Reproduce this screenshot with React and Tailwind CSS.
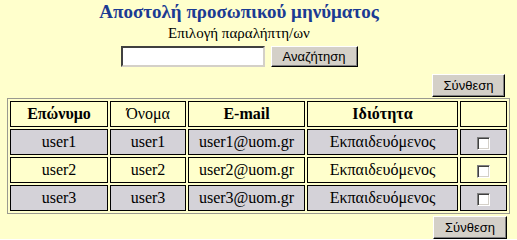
import React from "react";

const users = [
  { last: "user1", first: "user1", mail: "user1@uom.gr", role: "Εκπαιδευόμενος" },
  { last: "user2", first: "user2", mail: "user2@uom.gr", role: "Εκπαιδευόμενος" },
  { last: "user3", first: "user3", mail: "user3@uom.gr", role: "Εκπαιδευόμενος" },
];

// classic windows 3d button
const WinButton = ({ children, className = "" }) => (
  <button
    type="button"
    className={
      "border border-t-white border-l-white border-r-black border-b-black bg-[#d4d0c8] px-2 [font-family:'Liberation_Sans',Arial,sans-serif] text-[13px] leading-none text-black shadow-[inset_-1px_-1px_#808080] " +
      className
    }
  >
    {children}
  </button>
);

const Checkbox = () => (
  <span className="inline-block h-[13px] w-[13px] border border-t-[#808080] border-l-[#808080] border-r-white border-b-white bg-white align-middle shadow-[inset_1px_1px_#404040,inset_-1px_-1px_#d4d0c8]" />
);

const cell = "border border-black text-center";

export default function App() {
  return (
    <div className="min-h-[239px] w-[517px] bg-[#ffffcc] [font-family:'Liberation_Serif','Times_New_Roman',serif] text-black">
      <div className="w-[478px]">
        <h1 className="pt-[1px] text-center text-[19px] font-bold leading-[22px] text-[#1b3b93]">
          Αποστολή προσωπικού μηνύματος
        </h1>
        <p className="text-center text-[15px] leading-[20px]">Επιλογή παραλήπτη/ων</p>
        <div className="mt-[3px] flex items-center justify-center gap-[6px]">
          <input
            type="text"
            className="h-[21px] w-[144px] border-2 border-t-[#404040] border-l-[#404040] border-r-[#d4d0c8] border-b-[#d4d0c8] bg-white outline-none"
          />
          <WinButton className="h-[21px] w-[87px]">Αναζήτηση</WinButton>
        </div>
      </div>
      <div className="mt-[7px] flex justify-end pr-[12px]">
        <WinButton className="h-[23px] w-[73px]">Σύνθεση</WinButton>
      </div>
      <table className="ml-[7px] mt-[1px] w-[503px] table-fixed border-separate border-spacing-[2px] border border-[#9a9a90] text-[16px]">
        <colgroup>
          <col className="w-[98px]" />
          <col className="w-[76px]" />
          <col className="w-[117px]" />
          <col className="w-[151px]" />
          <col className="w-[47px]" />
        </colgroup>
        <thead>
          <tr className="h-[24px] bg-[#ffffcc]">
            <th className={cell + " font-bold"}>Επώνυμο</th>
            <th className={cell + " font-normal"}>Όνομα</th>
            <th className={cell + " font-bold"}>E-mail</th>
            <th className={cell + " font-bold"}>Ιδιότητα</th>
            <th className={cell}></th>
          </tr>
        </thead>
        <tbody>
          {users.map((u, i) => (
            <tr key={u.mail} className={i % 2 === 0 ? "h-[24px] bg-[#d4d2d8]" : "h-[24px] bg-[#ffffcc]"}>
              <td className={cell}>{u.last}</td>
              <td className={cell}>{u.first}</td>
              <td className={cell}>{u.mail}</td>
              <td className={cell}>{u.role}</td>
              <td className={cell}>
                <Checkbox />
              </td>
            </tr>
          ))}
        </tbody>
      </table>
      <div className="mt-[2px] flex justify-end pr-[10px]">
        <WinButton className="h-[23px] w-[74px]">Σύνθεση</WinButton>
      </div>
    </div>
  );
}
